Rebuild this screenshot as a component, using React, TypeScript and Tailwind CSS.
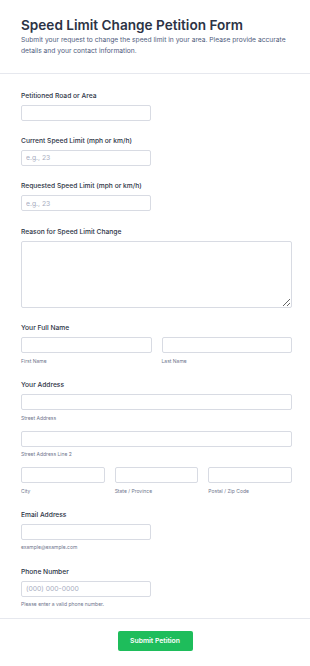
import type { ReactNode } from "react";

const font = { fontFamily: "Inter, 'Noto Sans', sans-serif" };

function Label({ children }: { children: ReactNode }) {
  return (
    <div className="mb-[4px] h-[10px] text-[6.7px] font-medium leading-[10px] text-[#2c3345]">
      {children}
    </div>
  );
}

function Sub({ children }: { children: ReactNode }) {
  return (
    <div className="mt-[4.5px] h-[7px] text-[5px] leading-[7px] text-[#6f768d]">{children}</div>
  );
}

function Input({ placeholder, className = "" }: { placeholder?: string; className?: string }) {
  return (
    <input
      placeholder={placeholder}
      className={`block h-4 rounded-[2px] border border-[#d8dbe3] bg-white px-[4px] text-[6.8px] text-[#2c3345] outline-none placeholder:text-[#a9aebf] ${className}`}
    />
  );
}

export default function App() {
  return (
    <div className="min-h-[666px] w-[310px] bg-white" style={font}>
      <header className="border-b border-[#e6e8ee] pl-[21px] pr-[18px] pt-[17px] pb-[15px]">
        <h1 className="text-[13.6px] font-semibold leading-[17px] text-[#2c3345]">
          Speed Limit Change Petition Form
        </h1>
        <p className="mt-[1px] text-[6.7px] leading-[11.3px] text-[#4f5c7d]">
          Submit your request to change the speed limit in your area. Please provide accurate
          details and your contact information.
        </p>
      </header>

      <form className="flex flex-col gap-[15.4px] pl-[21px] pr-[18px] pt-[17px]">
        <div>
          <Label>Petitioned Road or Area</Label>
          <Input className="w-[130px]" />
        </div>
        <div>
          <Label>Current Speed Limit (mph or km/h)</Label>
          <Input className="w-[130px]" placeholder="e.g., 23" />
        </div>
        <div>
          <Label>Requested Speed Limit (mph or km/h)</Label>
          <Input className="w-[130px]" placeholder="e.g., 23" />
        </div>
        <div>
          <Label>Reason for Speed Limit Change</Label>
          <textarea className="block h-[67px] w-full resize-y rounded-[2px] border border-[#d8dbe3] outline-none" />
        </div>
        <div>
          <Label>Your Full Name</Label>
          <div className="grid grid-cols-2 gap-[10px]">
            <div>
              <Input className="w-full" />
              <Sub>First Name</Sub>
            </div>
            <div>
              <Input className="w-full" />
              <Sub>Last Name</Sub>
            </div>
          </div>
        </div>
        <div className="flex flex-col gap-[9px]">
          <div>
            <Label>Your Address</Label>
            <Input className="w-full" />
            <Sub>Street Address</Sub>
          </div>
          <div>
            <Input className="w-full" />
            <Sub>Street Address Line 2</Sub>
          </div>
          <div className="grid grid-cols-3 gap-[10px]">
            <div>
              <Input className="w-full" />
              <Sub>City</Sub>
            </div>
            <div>
              <Input className="w-full" />
              <Sub>State / Province</Sub>
            </div>
            <div>
              <Input className="w-full" />
              <Sub>Postal / Zip Code</Sub>
            </div>
          </div>
        </div>
        <div>
          <Label>Email Address</Label>
          <Input className="w-[130px]" />
          <Sub>example@example.com</Sub>
        </div>
        <div>
          <Label>Phone Number</Label>
          <Input className="w-[130px]" placeholder="(000) 000-0000" />
          <Sub>Please enter a valid phone number.</Sub>
        </div>
      </form>

      <div className="mt-[10px] flex justify-center border-t border-[#e6e8ee] pt-[11.5px]">
        <button
          type="button"
          className="h-5 w-[75px] rounded-[2px] bg-[#1ebd5b] text-[6.8px] font-semibold text-white"
        >
          Submit Petition
        </button>
      </div>
    </div>
  );
}
